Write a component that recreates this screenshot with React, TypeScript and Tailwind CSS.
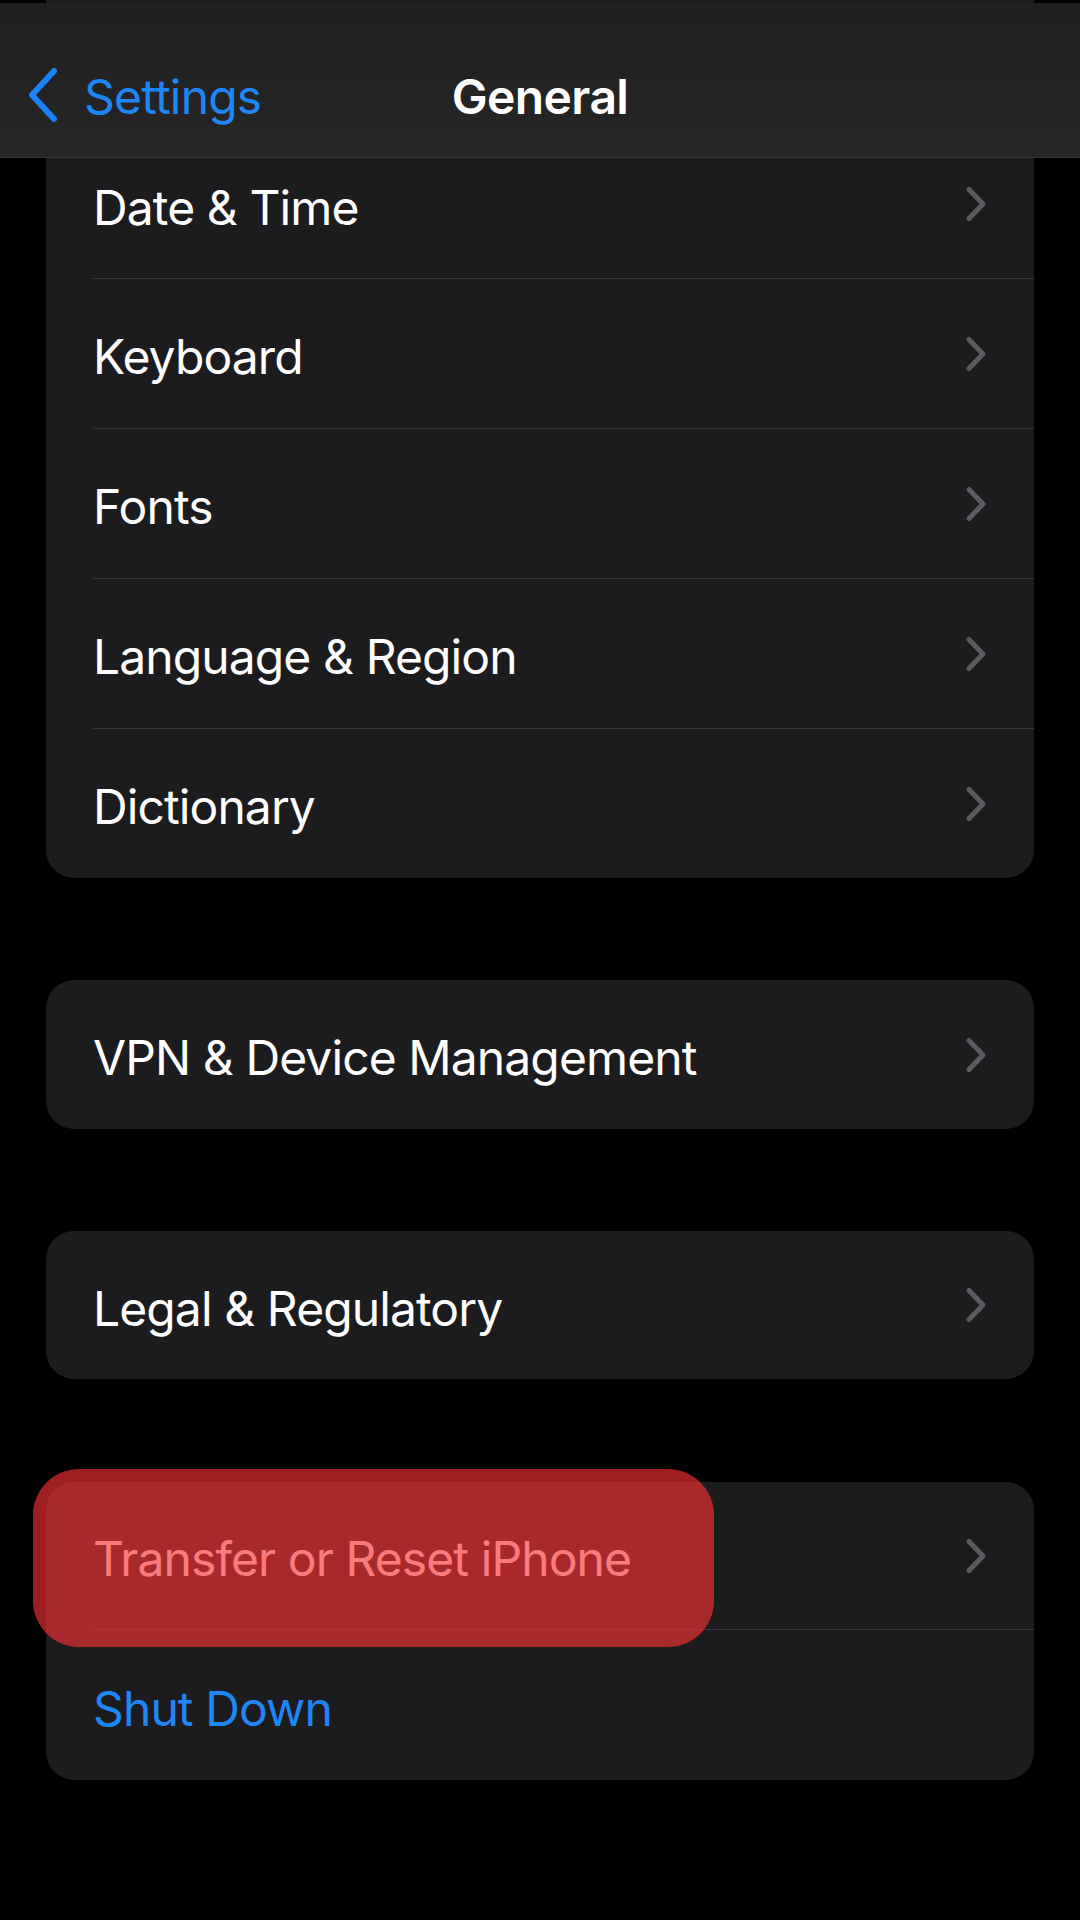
import React from "react";

const font = { fontFamily: "Inter, 'Noto Sans', sans-serif" };

function Chevron() {
  return (
    <svg width="22" height="36" viewBox="0 0 22 36" fill="none" className="shrink-0">
      <path d="M4 3.5 L18 18 L4 32.5" stroke="#5b5b5f" strokeWidth="5" strokeLinecap="round" strokeLinejoin="round" />
    </svg>
  );
}

function Row({
  label,
  height,
  last,
  chevron = true,
  color = "text-white",
  padBottom,
}: {
  label: string;
  height: string;
  last?: boolean;
  chevron?: boolean;
  color?: string;
  padBottom?: string;
}) {
  return (
    <div className={`flex pl-[47px] ${height}`}>
      <div
        className={`flex flex-1 items-center justify-between pr-[47px] ${padBottom ?? ""} ${
          last ? "" : "border-b border-[#38383a]"
        }`}
      >
        <span className={`pt-[7px] text-[48px] leading-none tracking-[-0.9px] ${color}`}>{label}</span>
        {chevron && <Chevron />}
      </div>
    </div>
  );
}

export default function App() {
  return (
    <div className="w-[1080px] h-[1920px] bg-black overflow-hidden flex flex-col" style={font}>
      {/* top strip */}
      <div className="h-[3px] px-[46px] bg-black">
        <div className="h-full bg-[#1c1c1e]" />
      </div>
      {/* header */}
      <div className="relative h-[155px] bg-gradient-to-b from-[#1f1f1f] to-[#262626] border-b border-[#333335] flex items-center pt-[30px]">
        <div className="flex items-center pl-[27px]">
          <svg width="32" height="56" viewBox="0 0 32 56" fill="none">
            <path d="M27 4 L5 28 L27 52" stroke="#1a82f7" strokeWidth="6" strokeLinecap="round" strokeLinejoin="round" />
          </svg>
          <span className="ml-[25px] pt-[4px] text-[48px] leading-none text-[#1f86f5] tracking-[-0.8px]">Settings</span>
        </div>
        <div className="absolute inset-x-0 top-0 h-full flex items-center justify-center pt-[34px] pointer-events-none">
          <span className="text-[48px] leading-none font-semibold text-white tracking-[-0.6px]">General</span>
        </div>
      </div>

      {/* card 1 */}
      <div className="mx-[46px] bg-[#1c1c1e] rounded-b-[28px] overflow-hidden">
        <Row label="Date & Time" height="h-[121px]" padBottom="pb-[28px]" />
        <Row label="Keyboard" height="h-[150px]" />
        <Row label="Fonts" height="h-[150px]" />
        <Row label="Language & Region" height="h-[150px]" />
        <Row label="Dictionary" height="h-[149px]" last />
      </div>

      {/* card 2 */}
      <div className="mx-[46px] mt-[102px] bg-[#1c1c1e] rounded-[28px] overflow-hidden">
        <Row label="VPN & Device Management" height="h-[149px]" last />
      </div>

      {/* card 3 */}
      <div className="mx-[46px] mt-[102px] bg-[#1c1c1e] rounded-[28px] overflow-hidden">
        <Row label="Legal & Regulatory" height="h-[148px]" last />
      </div>

      {/* card 4 */}
      <div className="relative mx-[46px] mt-[103px] bg-[#1c1c1e] rounded-[28px]">
        <Row label="Transfer or Reset iPhone" height="h-[148px]" />
        <Row label="Shut Down" height="h-[150px]" last chevron={false} color="text-[#1f86f5]" />
        <div className="absolute left-[-13px] top-[-13px] w-[681px] h-[178px] rounded-[46px] bg-[rgba(247,48,53,0.64)]" />
      </div>
    </div>
  );
}
